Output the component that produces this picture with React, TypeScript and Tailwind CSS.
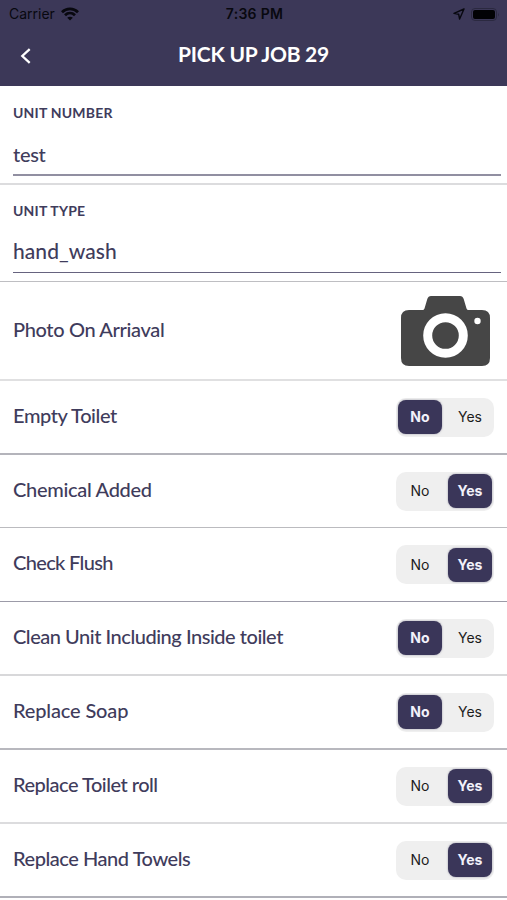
import React, { useState } from "react";
import clsx from "clsx";

type Answer = "No" | "Yes";

interface Task {
  label: string;
  answer: Answer;
  row: string;
  text: string;
}

const TASKS: Task[] = [
  { label: "Empty Toilet", answer: "No", row: "h-[74px] border-b-2 border-[#b4b4bb]", text: "tracking-[-0.4px]" },
  { label: "Chemical Added", answer: "Yes", row: "h-[73px] border-b border-[#bbbbbf]", text: "tracking-[-0.3px]" },
  { label: "Check Flush", answer: "Yes", row: "h-[74px] border-b border-[#9c9ba8]", text: "tracking-[-0.65px]" },
  { label: "Clean Unit Including Inside toilet", answer: "No", row: "h-[74px] border-b-2 border-[#d8d8da]", text: "tracking-[-0.47px]" },
  { label: "Replace Soap", answer: "No", row: "h-[74px] border-b-2 border-[#b8b8be]", text: "tracking-[-0.15px]" },
  { label: "Replace Toilet roll", answer: "Yes", row: "h-[74px] border-b-2 border-[#dcdcde]", text: "tracking-[-0.5px]" },
  { label: "Replace Hand Towels", answer: "Yes", row: "h-[74px] border-b-2 border-[#b0b0b8]", text: "tracking-[-0.45px]" },
];

const StatusBar: React.FC = () => (
  <div className="grid h-7 grid-cols-3 items-center pl-[9px] pr-[7px] font-['Inter',sans-serif] text-sm leading-none text-[#08080f]">
    <span className="flex items-center gap-[6px]">
      <span>Carrier</span>
      <svg className="h-[14px] w-[18px]" viewBox="0 0 18 14" fill="none" stroke="currentColor" strokeWidth="2.8">
        <path d="M1 5.2C5.5.8 12.5.8 17 5.2" />
        <path d="M4 8.3c2.9-2.8 7.1-2.8 10 0" />
        <path d="M9 13.6 6.2 10.8c1.6-1.5 4-1.5 5.6 0Z" fill="currentColor" stroke="none" />
      </svg>
    </span>
    <span className="text-center font-semibold tracking-[0.3px] whitespace-nowrap">7:36 PM</span>
    <span className="flex items-center justify-end gap-[6px]">
      <svg className="h-3 w-3" viewBox="0 0 12 12" fill="none" stroke="currentColor" strokeWidth="1.4" strokeLinejoin="round">
        <path d="M11 1 1 5.4l4.7.9.9 4.7Z" />
      </svg>
      <svg className="h-[13px] w-[29px]" viewBox="0 0 29 13">
        <rect x="0.5" y="0.5" width="25" height="12" rx="3.5" fill="none" stroke="#2b2940" />
        <rect x="2" y="2" width="22" height="9" rx="2" fill="#020205" />
        <path d="M27 4.5q1.5 2 0 4Z" fill="#2b2940" />
      </svg>
    </span>
  </div>
);

const Header: React.FC = () => (
  <header className="h-[86px] bg-[#3c3858]">
    <StatusBar />
    <div className="grid h-[54px] grid-cols-[60px_1fr_60px] items-center text-white">
      <button aria-label="Back" className="pl-5 pt-px">
        <svg className="h-4 w-3" viewBox="0 0 12 16" fill="none" stroke="currentColor" strokeWidth="2.3">
          <path d="M9.7 1.2 2.3 8l7.4 6.8" />
        </svg>
      </button>
      <h1 className="pb-1 text-center text-[21px] font-bold leading-none tracking-[-0.25px] whitespace-nowrap">PICK UP JOB 29</h1>
    </div>
  </header>
);

interface FieldProps {
  label: string;
  value: string;
  row: string;
  text: string;
}

const Field: React.FC<FieldProps> = ({ label, value, row, text }) => (
  <label className={clsx("block pl-[13px] pr-[6px]", row)}>
    <span className="block text-sm font-bold leading-4 tracking-[0.2px]">{label}</span>
    <span className={clsx("block h-[34px] font-medium", text)}>{value}</span>
  </label>
);

const CameraIcon: React.FC = () => (
  <svg className="h-[70px] w-[89px]" viewBox="0 0 89 70">
    <path
      d="M8 14h13.5q1.500 0 2-1.500L26.300 3Q27.300 0 30 0h29q2.700 0 3.700 3l2.800 9.500q.5 1.500 2 1.500H81q8 0 8 8v40q0 8-8 8H8q-8 0-8-8V22q0-8 8-8Z"
      fill="#464646"
    />
    <circle cx="44.5" cy="39.5" r="17.8" fill="none" stroke="#fff" strokeWidth="9" />
    <circle cx="76.5" cy="25" r="3.2" fill="#fff" />
  </svg>
);

const Toggle: React.FC<{ initial: Answer }> = ({ initial }) => {
  const [value, setValue] = useState<Answer>(initial);

  return (
    <div className="flex h-[39px] w-[98px] items-center justify-between rounded-[10px] bg-[#efefef] px-[2px] font-['Inter',sans-serif] text-sm">
      {(["No", "Yes"] as Answer[]).map((option) => (
        <button
          key={option}
          onClick={() => setValue(option)}
          className={clsx(
            "h-[34px] w-[44px] rounded-lg",
            option === value ? "bg-[#3a3659] font-bold text-[#f2f1fa] shadow-[0_0_2px_rgba(58,54,89,0.5)]" : "text-[#1c1c1c]",
          )}
        >
          {option}
        </button>
      ))}
    </div>
  );
};

export default function App() {
  return (
    <div className="h-[900px] w-full overflow-hidden bg-white font-['Lato',sans-serif] text-[#3f3c5c]">
      <Header />
      <Field
        label="UNIT NUMBER"
        value="test"
        row="h-[99px] border-b-2 border-[#dcdcde] pt-[19px]"
        text="mt-[21px] border-b-2 border-[#918fa1] text-xl leading-6 tracking-[-0.3px]"
      />
      <Field
        label="UNIT TYPE"
        value="hand_wash"
        row="h-[97px] border-b border-[#bebec2] pt-[18px]"
        text="mt-5 border-b border-[#66637f] text-[21px] leading-6 tracking-[0.05px]"
      />
      <div className="flex h-[99px] items-center justify-between border-b-2 border-[#e0e0e1] pl-[13px] pr-[17px]">
        <span className="pb-1 text-xl font-medium leading-6 tracking-[-0.35px]">Photo On Arriaval</span>
        <CameraIcon />
      </div>
      {TASKS.map((task) => (
        <div key={task.label} className={clsx("flex items-center justify-between px-[13px]", task.row)}>
          <span className={clsx("pb-[5px] text-xl font-medium leading-6", task.text)}>{task.label}</span>
          <Toggle initial={task.answer} />
        </div>
      ))}
    </div>
  );
}
